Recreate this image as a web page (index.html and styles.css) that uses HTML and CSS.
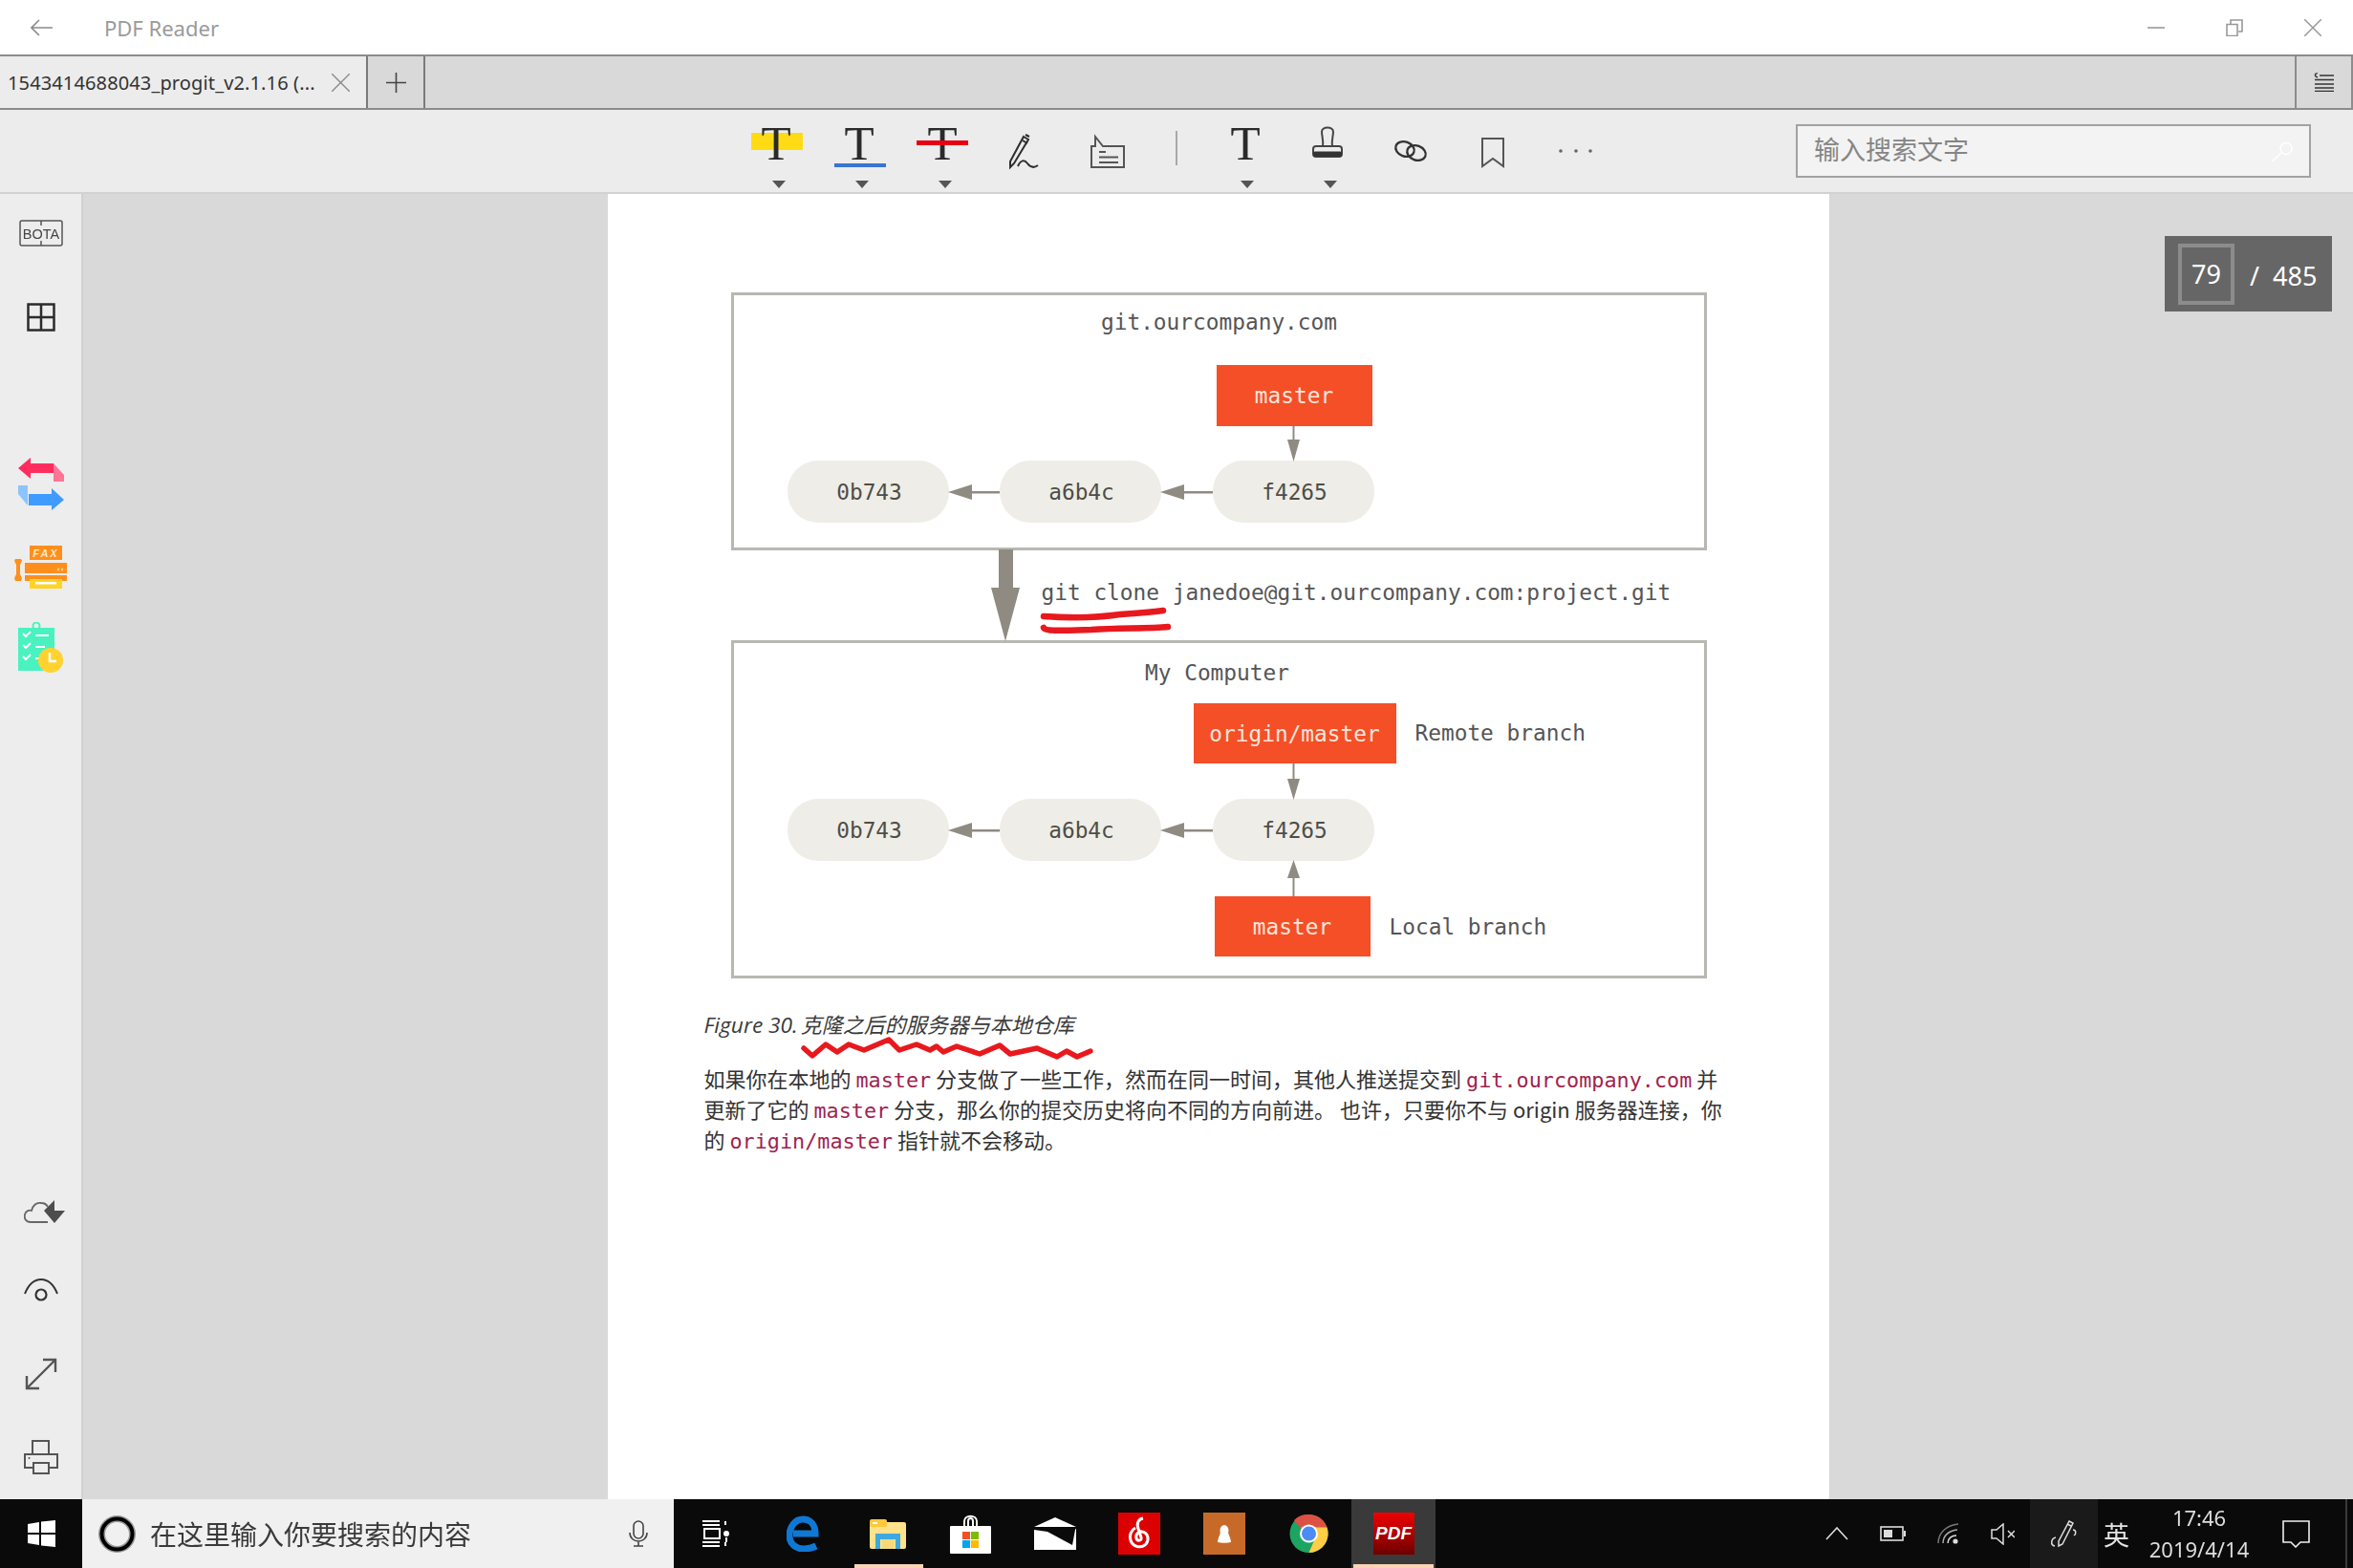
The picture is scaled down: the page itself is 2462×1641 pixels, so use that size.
FILE: index.html
```html
<!DOCTYPE html>
<html lang="zh">
<head>
<meta charset="utf-8">
<title>PDF Reader</title>
<link rel="stylesheet" href="styles.css">
</head>
<body>
<div class="app">
  <header class="titlebar">
    <svg class="back" width="23" height="18" viewBox="0 0 23 18"><path d="M23 9H1M9 1L1 9l8 8" fill="none" stroke="#8a8a8a" stroke-width="1.6"/></svg>
    <span class="app-name">PDF Reader</span>
    <div class="win-controls">
      <svg width="18" height="18" viewBox="0 0 18 18"><path d="M0 9h18" stroke="#999" stroke-width="1.6"/></svg>
      <svg width="18" height="18" viewBox="0 0 18 18"><path d="M1 5.500h11v12H1zM5 5V1h12v12h-4" fill="none" stroke="#999" stroke-width="1.6"/></svg>
      <svg width="18" height="18" viewBox="0 0 18 18"><path d="M0 0l18 18M18 0L0 18" stroke="#999" stroke-width="1.5"/></svg>
    </div>
  </header>

  <div class="tabbar">
    <div class="tab">
      <span class="tab-title">1543414688043_progit_v2.1.16 (...</span>
      <svg class="tab-close" width="19" height="19" viewBox="0 0 19 19"><path d="M0 0l19 19M19 0L0 19" stroke="#8a8a8a" stroke-width="1.4"/></svg>
    </div>
    <div class="tab-add"><svg width="21" height="21" viewBox="0 0 21 21"><path d="M10.500 0v21M0 10.500h21" stroke="#444" stroke-width="1.6"/></svg></div>
    <div class="tab-list">
      <svg width="21" height="20" viewBox="0 0 21 20"><path d="M6 3h15M1 7.500h20M1 12h20M1 16h20M1 19.500h20" fill="none" stroke="#333" stroke-width="1.3"/><path d="M4 5C0 4 1 0 4 1" fill="none" stroke="#333" stroke-width="1.300"/></svg>
    </div>
  </div>

  <div class="toolbar">
    <div class="tool">
      <svg width="60" height="62" viewBox="0 -12 60 62"><rect x="4" y="9" width="54" height="18" fill="#ffdb16"/><text class="tool-t" x="30" y="37">T</text></svg>
      <i class="caret"></i>
    </div>
    <div class="tool">
      <svg width="60" height="62" viewBox="0 -12 60 62"><text class="tool-t" x="30" y="37">T</text><rect x="4" y="41" width="54" height="4" fill="#3a75d0"/></svg>
      <i class="caret"></i>
    </div>
    <div class="tool">
      <svg width="60" height="62" viewBox="0 -12 60 62"><text class="tool-t" x="30" y="37">T</text><rect x="3" y="17" width="54" height="5" fill="#e60012"/></svg>
      <i class="caret"></i>
    </div>
    <div class="tool">
      <svg width="60" height="62" viewBox="0 -12 60 62"><g transform="translate(13 10)" fill="none" stroke="#2e2e2e" stroke-width="2"><path d="M15 3l5 3L5 31l-4 4 0-6z"/><path d="M14 7l5 3M17 1l4 2"/><path d="M9 34c3-7 7-7 10-3 3 4 7 5 11 2"/></g></svg>
    </div>
    <div class="tool">
      <svg width="60" height="62" viewBox="0 -12 60 62"><g transform="translate(11 12)" fill="none" stroke="#555" stroke-width="2"><path d="M1 33V11h4V1l8 10h22v22z"/><path d="M9 17h7M9 22.500h20M9 28h20"/></g></svg>
    </div>
    <div class="tool-sep"></div>
    <div class="tool">
      <svg width="60" height="62" viewBox="0 -12 60 62"><text class="tool-t" x="31" y="37">T</text></svg>
      <i class="caret"></i>
    </div>
    <div class="tool">
      <svg width="60" height="62" viewBox="0 -12 60 62"><g transform="translate(14 3)"><path d="M11 20c1-6-1-11-1-15 0-6 12-6 12 0 0 4-2 9-1 15" fill="none" stroke="#444" stroke-width="2"/><rect x="1" y="20" width="30" height="11" rx="3" fill="#ececec" stroke="#444" stroke-width="2"/><rect x="1" y="25.500" width="30" height="5.500" rx="2" fill="#333"/></g></svg>
      <i class="caret"></i>
    </div>
    <div class="tool">
      <svg width="60" height="62" viewBox="0 -12 60 62"><g transform="translate(12 17)" fill="none" stroke="#333" stroke-width="2.300"><ellipse cx="12" cy="9" rx="10" ry="7.500" transform="rotate(20 12 9)"/><ellipse cx="24" cy="13" rx="10" ry="7.500" transform="rotate(20 24 13)"/></g></svg>
    </div>
    <div class="tool">
      <svg width="60" height="62" viewBox="0 -12 60 62"><path d="M18 15h22v29l-11-8-11 8z" fill="none" stroke="#555" stroke-width="2"/></svg>
    </div>
    <div class="tool">
      <svg width="60" height="62" viewBox="0 -12 60 62"><g fill="#666"><circle cx="13" cy="28" r="1.800"/><circle cx="29" cy="28" r="1.800"/><circle cx="44" cy="28" r="1.800"/></g></svg>
    </div>
    <div class="search-box">
      <span class="search-hint">输入搜索文字</span>
      <svg width="23" height="21" viewBox="0 0 23 21"><circle cx="16" cy="7.500" r="6" fill="none" stroke="#fff" stroke-width="1.500"/><path d="M11 12L1 21" stroke="#fff" stroke-width="1.500"/></svg>
    </div>
  </div>

  <main class="main">
    <nav class="sidebar">
      <svg class="side-item" width="46" height="28" viewBox="0 0 46 28"><rect x="1" y="1" width="44" height="26" rx="2" fill="none" stroke="#555" stroke-width="1.500"/><path d="M23 1v5M23 22v5" stroke="#555" stroke-width="1.500"/><text class="bota" x="23" y="19.500">BOTA</text></svg>
      <svg class="side-item gap-grid" width="30" height="30" viewBox="0 0 30 30"><path d="M1.500 1.500h27v27h-27zM15 1.500v27M1.500 15h27" fill="none" stroke="#2b2b2b" stroke-width="2.500"/></svg>
      <svg class="side-item gap-swap" width="48" height="55" viewBox="0 0 48 55"><path d="M0 11L13 0v6h24v19H37V16H13v6z" fill="#ff2d5e"/><path d="M37 6l11 12v7H37z" fill="#ff7596"/><path d="M48 44L35 32v6H11V29h0v21h24v5z" fill="#3f9bff"/><path d="M0 29h10v21L0 38z" fill="#8cc4ff"/></svg>
      <svg class="side-item gap-fax" width="55" height="45" viewBox="0 0 55 45"><rect x="16" y="0" width="34" height="15" fill="#ff8f1c"/><text class="fax" x="33" y="12">FAX</text><rect x="11" y="18" width="44" height="11" fill="#ff8f1c"/><circle cx="46" cy="25" r="1.200" fill="#ffd9a8"/><circle cx="50" cy="25" r="1.200" fill="#ffd9a8"/><rect x="11" y="31" width="44" height="6" fill="#ff8f1c"/><rect x="16" y="35" width="34" height="10" fill="#ffd426"/><rect x="22" y="38" width="22" height="2.500" fill="#fff"/><path d="M1 14h6l1 2-2 4v10l2 4-1 3H1l-1-3 2-4V20L0 16z" fill="#ff8f1c"/></svg>
      <svg class="side-item gap-clip" width="48" height="54" viewBox="0 0 48 54"><rect x="0" y="6" width="38" height="45" fill="#4af2c0"/><circle cx="19" cy="4" r="3.500" fill="none" stroke="#4af2c0" stroke-width="2"/><path d="M5 12l3 3 5-5M5 24l3 3 5-5M5 36l3 3 5-5" fill="none" stroke="#fff" stroke-width="2"/><path d="M18 14h14M18 26h10M18 38h4" stroke="#fff" stroke-width="2"/><circle cx="34" cy="40" r="13" fill="#ffd230"/><path d="M33 32v9h7" fill="none" stroke="#fff" stroke-width="2.500"/></svg>

      <svg class="side-item side-cloud" width="43" height="25" viewBox="0 0 43 25"><path d="M25 23H7C2 23 0 19 1 15c1-4 5-5 7-4 1-5 5-9 10-8 3 0 6 2 7 4" fill="none" stroke="#666" stroke-width="1.800"/><path d="M21 11L32 0v11h11L32 24z" fill="#4d4d4d"/></svg>
      <svg class="side-item gap-eye" width="36" height="24" viewBox="0 0 36 24"><path d="M1 16C5 6 11 1 18 1s13 5 17 15" fill="none" stroke="#333" stroke-width="2"/><circle cx="18" cy="17" r="5.500" fill="none" stroke="#333" stroke-width="2.200"/></svg>
      <svg class="side-item gap-exp" width="34" height="34" viewBox="0 0 34 34"><path d="M2 32L32 2M19 2h13v13M2 19v13h13" fill="none" stroke="#555" stroke-width="2.400"/></svg>
      <svg class="side-item gap-print" width="36" height="36" viewBox="0 0 36 36"><path d="M9 15V1h17v14M9 29H1V15h34v14h-8" fill="none" stroke="#555" stroke-width="2"/><rect x="10" y="24" width="16" height="11" fill="none" stroke="#555" stroke-width="2"/><circle cx="5.500" cy="19" r="1" fill="#555"/></svg>
    </nav>

    <section class="viewer">
      <article class="page">
        <div class="diagram">
          <div class="repo repo-a"></div>
          <div class="repo repo-b"></div>
          <div class="lbl lbl-server">git.ourcompany.com</div>
          <div class="ref ref-m1">master</div>
          <div class="pill p1 r1">0b743</div>
          <div class="pill p2 r1">a6b4c</div>
          <div class="pill p3 r1">f4265</div>
          <div class="lbl lbl-clone">git clone janedoe@git.ourcompany.com:project.git</div>
          <div class="lbl lbl-mine">My Computer</div>
          <div class="ref ref-origin">origin/master</div>
          <div class="lbl lbl-remote">Remote branch</div>
          <div class="pill p1 r2">0b743</div>
          <div class="pill p2 r2">a6b4c</div>
          <div class="pill p3 r2">f4265</div>
          <div class="ref ref-m2">master</div>
          <div class="lbl lbl-local">Local branch</div>
          <svg class="arrows" width="1018" height="715" viewBox="0 0 1018 715">
            <g fill="#8f8b82" stroke="none">
              <rect x="585.500" y="138" width="2" height="16"/><path d="M586.500 175l-6.500-23h13z"/>
              <rect x="250" y="206" width="29" height="2.500"/><path d="M225 207l25-8v16z"/>
              <rect x="472" y="206" width="30" height="2.500"/><path d="M447 207l25-8v16z"/>
              <rect x="278" y="267" width="15" height="40"/><path d="M285 363l-15-56h30z"/>
              <rect x="585.500" y="491" width="2" height="17"/><path d="M586.500 529l-6.500-22h13z"/>
              <rect x="250" y="560" width="29" height="2.500"/><path d="M225 561l25-8v16z"/>
              <rect x="472" y="560" width="30" height="2.500"/><path d="M447 561l25-8v16z"/>
              <rect x="585.500" y="609" width="2" height="21"/><path d="M586.500 592l-6.500 19h13z"/>
            </g>
            <g fill="none" stroke="#e8191e" stroke-width="6.500" stroke-linecap="round">
              <path d="M325 337c30 2 60 1 80-2 15-1 30-2 45-4"/>
              <path d="M325 349c2 4 20 3 50 2 30-2 60-1 80-3"/>
            </g>
          </svg>
        </div>
        <p class="caption"><span class="fig">Figure 30.</span>克隆之后的服务器与本地仓库<svg class="squiggle" width="310" height="26" viewBox="0 0 310 26"><path d="M3 12l9 8 14-12 12 8 12-8 16 6 26-11 11 11 18-6 14 6 7-4 7 6 14-6 24 8 21-9 11 9 28-6 21 9 10-6 11 6 14-6" fill="none" stroke="#e8191e" stroke-width="5.500" stroke-linejoin="round" stroke-linecap="round"/></svg></p>
        <div class="para">
          <div class="pl">如果你在本地的 <code>master</code> 分支做了一些工作，然而在同一时间，其他人推送提交到 <code>git.ourcompany.com</code> 并</div>
          <div class="pl">更新了它的 <code>master</code> 分支，那么你的提交历史将向不同的方向前进。 也许，只要你不与 origin 服务器连接，你</div>
          <div class="pl pl-last">的 <code>origin/master</code> 指针就不会移动。</div>
        </div>
      </article>
      <div class="page-nav">
        <span class="page-cur">79</span>
        <span class="page-total">/&nbsp; 485</span>
      </div>
    </section>
  </main>

  <footer class="taskbar">
    <div class="start">
      <svg width="29" height="28" viewBox="0 0 29 28"><path d="M0 4l12-2v11H0zM14 1.500L29 0v13H14zM0 15h12v11L0 24zM14 15h15v13l-15-1.500z" fill="#fff"/></svg>
    </div>
    <div class="tb-search">
      <svg width="39" height="39" viewBox="0 0 39 39"><circle cx="19.500" cy="19.500" r="16" fill="none" stroke="#999" stroke-width="7"/><circle cx="19.500" cy="19.500" r="16" fill="none" stroke="#000" stroke-width="4"/></svg>
      <span class="tb-hint">在这里输入你要搜索的内容</span>
      <svg class="mic" width="20" height="28" viewBox="0 0 20 28"><rect x="5" y="1" width="10" height="18" rx="5" fill="none" stroke="#444" stroke-width="1.600"/><path d="M1 13c0 12 18 12 18 0M10 22v5M5 27h10" fill="none" stroke="#444" stroke-width="1.600"/></svg>
    </div>
    <div class="task">
      <svg width="28" height="28" viewBox="0 0 28 28"><path d="M0 1h18M0 27h18M0 23h18M0 5h18M18 19H2V9h16zM24 1v4M24 23v4" fill="none" stroke="#fff" stroke-width="2"/><circle cx="25" cy="14" r="3" fill="#fff"/><path d="M25 18v5" stroke="#fff" stroke-width="2"/></svg>
    </div>
    <div class="task task-edge">
      <svg width="36" height="38" viewBox="0 0 36 38"><path d="M7 19h23c0-9-5-15-13-15C9 4 3 12 3 21c0 9 7 14 15 14 5 0 9-1 13-3" fill="none" stroke="#0f78d4" stroke-width="7"/></svg>
    </div>
    <div class="task task-open-ex">
      <svg width="38" height="31" viewBox="0 0 38 31"><rect x="0" y="3" width="38" height="28" rx="2" fill="#ffe28a"/><rect x="0" y="0" width="18" height="8" rx="2" fill="#ffc83d"/><rect x="3" y="3" width="5" height="2" fill="#fff"/><path d="M6 31V15h26v16h-5V21H11v10z" fill="#3fa8e0"/><rect x="13" y="21" width="12" height="10" fill="#f5d97a"/></svg>
    </div>
    <div class="task">
      <svg width="43" height="41" viewBox="0 0 43 41"><rect x="0" y="12" width="43" height="29" rx="1" fill="#fff"/><path d="M15 13V7c0-7 13-7 13 0v6M19 13V7c0-4 5-4 5 0v6" fill="none" stroke="#fff" stroke-width="2"/><rect x="13" y="18" width="8" height="8" fill="#f25022"/><rect x="22" y="18" width="8" height="8" fill="#7fba00"/><rect x="13" y="27" width="8" height="8" fill="#00a4ef"/><rect x="22" y="27" width="8" height="8" fill="#ffb900"/></svg>
    </div>
    <div class="task">
      <svg width="44" height="34" viewBox="0 0 44 34"><path d="M22 0l22 10H0z" fill="#fff"/><path d="M0 12h44v22H0z" fill="#fff"/><path d="M0 11h44l-1 2-3 16L14 15 0 13z" fill="#0a0a0a"/></svg>
    </div>
    <div class="task">
      <svg width="44" height="44" viewBox="0 0 44 44"><rect width="44" height="44" fill="#dd0000"/><path d="M26 6c-5 1-7 5-5 11l3 9c1 4-4 4-5 1-1-4 2-8 6-7 6 1 8 8 4 13-5 5-14 3-16-4-2-5 1-11 5-13" fill="none" stroke="#fff" stroke-width="3"/></svg>
    </div>
    <div class="task">
      <svg width="44" height="44" viewBox="0 0 44 44"><rect width="44" height="44" fill="#c76a29"/><ellipse cx="22" cy="19" rx="4.500" ry="6" fill="#fff"/><path d="M18 21c-2 5-3 8-3 10 4 1 10 1 14 0 0-2-1-5-3-10z" fill="#fff"/></svg>
    </div>
    <div class="task">
      <svg width="41" height="40" viewBox="0 0 41 40"><circle cx="20.500" cy="20" r="20" fill="#1da462"/><path d="M20.500 0a20 20 0 0 1 19 13.500H20.500A7 7 0 0 0 14 17L5 6A20 20 0 0 1 20.500 0z" fill="#dd5144"/><path d="M39.500 13.500A20 20 0 0 1 20.500 40L27 25a7 7 0 0 0-1-11.500z" fill="#ffcd46"/><circle cx="20.500" cy="20" r="9.500" fill="#fff"/><circle cx="20.500" cy="20" r="7.500" fill="#4c8bf5"/></svg>
    </div>
    <div class="task task-active">
      <div class="pdf-icon">PDF</div>
    </div>
    <div class="tray">
      <div class="t-chev"><svg width="24" height="14" viewBox="0 0 24 14"><path d="M1 13L12 1l11 12" fill="none" stroke="#ddd" stroke-width="1.600"/></svg></div>
      <div class="t-batt"><svg width="27" height="16" viewBox="0 0 27 16"><rect x="1" y="1" width="23" height="14" fill="none" stroke="#ddd" stroke-width="1.600"/><rect x="4" y="4" width="9" height="8" fill="#ddd"/><rect x="25" y="5" width="2" height="6" fill="#ddd"/></svg></div>
      <div class="t-wifi"><svg width="23" height="22" viewBox="0 0 23 22"><path d="M1 21C1 10 10 2 22 1" fill="none" stroke="#777" stroke-width="1.500"/><path d="M6 21c0-8 6-13 15-14" fill="none" stroke="#aaa" stroke-width="1.500"/><path d="M11 21c0-5 4-8 9-8" fill="none" stroke="#ddd" stroke-width="1.500"/><circle cx="19" cy="19" r="2.600" fill="#ddd"/></svg></div>
      <div class="t-vol"><svg width="25" height="23" viewBox="0 0 25 23"><path d="M1 7h5l7-6v21l-7-6H1z" fill="none" stroke="#ddd" stroke-width="1.500"/><path d="M18 8l7 7M25 8l-7 7" stroke="#ddd" stroke-width="1.500"/></svg></div>
      <div class="t-pen"><svg width="30" height="30" viewBox="0 0 30 30"><path d="M20 2l4 2-11 22-4 2 0-5zM18 5l4 2" fill="none" stroke="#ddd" stroke-width="1.500"/><path d="M6 19c-5 1-6 8-1 9M24 11c3 0 4 4 1 6" fill="none" stroke="#ddd" stroke-width="1.500"/></svg></div>
      <div class="t-ime">英</div>
      <div class="t-clock"><span>17:46</span><span>2019/4/14</span></div>
      <div class="t-action"><svg width="29" height="29" viewBox="0 0 29 29"><path d="M1 1h27v22H19l-5 5-5-5H1z" fill="none" stroke="#eee" stroke-width="1.600"/></svg></div>
      <div class="t-end"></div>
    </div>
  </footer>
</div>
</body>
</html>
```
FILE: styles.css
```css
* { box-sizing: border-box; }
html, body { margin: 0; padding: 0; background: #fff; }
body { font-family: "Noto Sans", "Noto Sans CJK SC", sans-serif; }
svg { display: block; flex: none; }

/* the reference is a soft, upscaled capture */
.app { width: 2462px; height: 1641px; display: flex; flex-direction: column; overflow: hidden; filter: blur(0.5px); }

/* title bar */
.titlebar { height: 57px; flex: none; display: flex; align-items: center; background: #fff; padding-left: 32px; }
.app-name { margin-left: 54px; font-size: 22px; color: #9a9a9a; }
.win-controls { margin-left: auto; margin-right: 33px; display: flex; gap: 64px; }

/* tabs */
.tabbar { height: 58px; flex: none; display: flex; background: #d9d9d9; border-top: 2px solid #8c8c8c; border-bottom: 2px solid #8c8c8c; }
.tab { width: 385px; background: #ececec; border-right: 2px solid #7a7a7a; display: flex; align-items: center; padding-left: 8px; }
.tab-title { font-size: 20px; letter-spacing: 0.13px; color: #333; white-space: nowrap; width: 339px; padding-top: 1px; }
.tab-add { width: 60px; border-right: 2px solid #7a7a7a; display: flex; align-items: center; justify-content: center; }
.tab-list { margin-left: auto; width: 61px; border-left: 2px solid #8c8c8c; border-right: 2px solid #8c8c8c; display: flex; align-items: center; justify-content: center; }

/* toolbar */
.toolbar { height: 88px; flex: none; display: flex; background: #ececec; border-bottom: 2px solid #d2d2d2; padding-left: 768px; }
.tool { width: 87px; flex: none; display: flex; flex-direction: column; align-items: center; padding-top: 3px; }
.tool-t { font-family: "Liberation Serif", serif; font-size: 51px; fill: #2a2a2a; text-anchor: middle; }
.caret { display: block; width: 0; height: 0; margin-top: 9px; margin-left: 6px; border-left: 7.5px solid transparent; border-right: 7.5px solid transparent; border-top: 8px solid #555; }
.tool-sep { width: 55px; flex: none; display: flex; justify-content: center; padding-top: 22px; height: 58px; }
.tool-sep::before { content: ""; width: 2px; height: 36px; background: #a8a8a8; }
.search-box { margin: 15px 44px 0 auto; width: 539px; height: 56px; background: #f3f3f3; border: 2px solid #a2a2a2; display: flex; align-items: center; justify-content: space-between; padding: 0 17px 0 17px; }
.search-hint { font-family: "Noto Sans CJK SC", sans-serif; font-size: 27px; color: #858585; margin-top: -6px; }

/* main */
.main { flex: 1; min-height: 0; display: flex; }
.sidebar { width: 87px; flex: none; background: #ededed; border-right: 2px solid #d0d0d0; display: flex; flex-direction: column; align-items: center; padding: 27px 0 26px; }
.bota { font-family: "Liberation Sans", sans-serif; font-size: 14.500px; fill: #444; text-anchor: middle; }
.fax { font-family: "Liberation Sans", sans-serif; font-size: 11px; font-weight: 700; font-style: italic; letter-spacing: 2px; fill: #ffe6c7; text-anchor: middle; }
.gap-grid { margin-top: 59px; }
.gap-swap { margin-top: 132px; }
.gap-fax { margin-top: 37px; }
.gap-clip { margin-top: 35px; }
.side-cloud { margin-top: auto; margin-left: 8px; margin-bottom: -2px; }
.gap-eye { margin-top: 59px; margin-bottom: -1px; }
.gap-exp { margin-top: 60px; }
.gap-print { margin-top: 52px; }

.viewer { flex: 1; background: #d9d9d9; display: flex; justify-content: center; position: relative; }
.page { width: 1278px; background: #fff; padding: 105px 0 0; overflow: hidden; }

/* diagram */
.diagram { position: relative; width: 1018px; height: 715px; margin-left: 131px; font-family: "DejaVu Sans Mono", monospace; font-size: 22.800px; color: #555; }
.repo { position: absolute; left: -2px; width: 1021px; border: 3px solid #b8b8b2; }
.repo-a { top: -2px; height: 270px; }
.repo-b { top: 362px; height: 354px; }
.lbl { position: absolute; height: 30px; line-height: 30px; white-space: nowrap; }
.lbl-server { left: 0; width: 1018px; text-align: center; top: 14px; }
.lbl-mine { left: 0; width: 1014px; text-align: center; top: 381px; }
.lbl-clone { left: 323px; top: 297px; }
.lbl-remote { left: 714px; top: 444px; }
.lbl-local { left: 687px; top: 647px; }
.ref { position: absolute; background: #f54f27; color: #f8e6dc; display: flex; align-items: center; justify-content: center; }
.ref-m1 { left: 506px; top: 74px; width: 163px; height: 64px; }
.ref-origin { left: 482px; top: 428px; width: 212px; height: 63px; }
.ref-m2 { left: 504px; top: 630px; width: 163px; height: 63px; }
.pill { position: absolute; width: 169px; height: 65px; border-radius: 32px; background: #eeede7; display: flex; align-items: center; justify-content: center; padding-left: 3px; color: #4f4d48; }
.p1 { left: 57px; }
.p2 { left: 279px; }
.p3 { left: 502px; }
.r1 { top: 174px; }
.r2 { top: 528px; }
.arrows { position: absolute; left: 0; top: 0; overflow: visible; }

/* text */
.caption { position: relative; margin: 33px 0 0 101px; height: 30px; line-height: 30px; font-family: "Noto Sans CJK SC", sans-serif; font-style: italic; font-size: 22px; color: #3a3a3a; white-space: nowrap; }
.fig { font-family: "Open Sans", sans-serif; font-size: 22.700px; margin-right: 3px; }
.squiggle { position: absolute; left: 101px; top: 29px; }
.para { margin: 26px 0 0 101px; width: 1056px; font-family: "Noto Sans CJK SC", "Noto Sans", sans-serif; font-size: 22px; color: #333; }
.pl { height: 32px; line-height: 32px; white-space: nowrap; text-align-last: justify; }
.pl-last { text-align-last: left; }
code { font-family: "DejaVu Sans Mono", monospace; font-size: 21.800px; color: #a0234f; }

/* page counter */
.page-nav { position: absolute; right: 22px; top: 44px; width: 175px; height: 79px; background: #666; display: flex; align-items: center; color: #fff; }
.page-cur { margin-left: 14px; width: 59px; height: 64px; border: 4px solid #8c8c8c; display: flex; align-items: center; justify-content: center; font-size: 27px; }
.page-total { margin-left: 16px; font-size: 27px; margin-top: 3px; white-space: nowrap; }

/* taskbar */
.taskbar { height: 72px; flex: none; display: flex; background: #0a0a0a; color: #ddd; }
.start { width: 86px; flex: none; display: flex; align-items: center; justify-content: center; }
.tb-search { width: 619px; flex: none; background: #f0f0f0; display: flex; align-items: center; padding: 0 27px 0 17px; }
.tb-hint { margin-left: 15px; font-family: "Noto Sans CJK SC", sans-serif; font-size: 28px; color: #3a3a3a; white-space: nowrap; }
.mic { margin-left: auto; }
.task { position: relative; width: 88.600px; flex: none; display: flex; align-items: center; justify-content: center; }
.task-edge { padding-left: 6px; }
.task-open-ex { padding-left: 6px; }
.task-open-ex::after { content: ""; position: absolute; left: 12px; right: 5px; bottom: 0; height: 4px; background: #fcd3b4; }
.task-active { background: #3a3a3a; }
.task-active::after { content: ""; position: absolute; left: 2px; right: 2px; bottom: 0; height: 4px; background: #fcd3b4; }
.pdf-icon { width: 43px; height: 44px; background: linear-gradient(#f00000, #6d0000); display: flex; align-items: center; justify-content: center; font-family: "Liberation Sans", sans-serif; font-weight: 700; font-style: italic; font-size: 19px; color: #fff; }

.tray { margin-left: auto; display: flex; align-items: stretch; }
.tray > div { display: flex; align-items: center; justify-content: center; flex: none; }
.t-chev { width: 58px; }
.t-batt { width: 59px; }
.t-wifi { width: 56px; }
.t-vol { width: 58px; }
.t-pen { width: 71px; background: #1a1a1a; }
.tray .t-ime { width: 39px; font-family: "Noto Sans CJK SC", sans-serif; font-size: 27px; color: #e4e4e4; }
.tray .t-clock { width: 134px; flex-direction: column; font-size: 22px; line-height: 33px; color: #ddd; }
.t-action { width: 68px; }
.tray .t-end { width: 2px; margin-left: 18px; margin-right: 6px; background: #3a3a3a; }
```
